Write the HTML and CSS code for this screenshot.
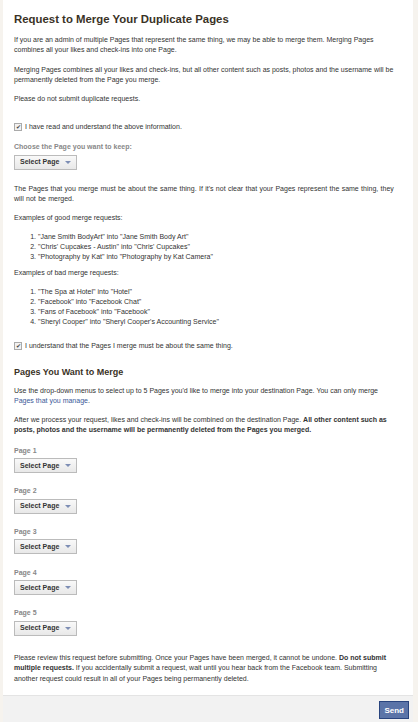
FILE: index.html
```html
<!DOCTYPE html>
<html lang="en">
<head>
  <meta charset="UTF-8" />
  <meta name="viewport" content="width=device-width, initial-scale=1.0"/>
  <title>Request to Merge Your Duplicate Pages</title>
  <link rel="stylesheet" href="styles.css">
</head>
<body>
  <div class="dialog">
    <div class="dialog-body">
      <h1>Request to Merge Your Duplicate Pages</h1>
      <p>If you are an admin of multiple Pages that represent the same thing, we may be able to merge them. Merging Pages combines all your likes and check-ins into one Page.</p>
      <p class="gap">Merging Pages combines all your likes and check-ins, but all other content such as posts, photos and the username will be permanently deleted from the Page you merge.</p>
      <p>Please do not submit duplicate requests.</p>

      <label class="check first"><span class="box">&#10004;</span> I have read and understand the above information.</label>

      <div class="field keep">
        <div class="label">Choose the Page you want to keep:</div>
        <span class="select">Select Page <span class="arrow"></span></span>
      </div>

      <p class="after-keep">The Pages that you merge must be about the same thing. If it's not clear that your Pages represent the same thing, they will not be merged.</p>
      <p>Examples of good merge requests:</p>
      <ol>
        <li>"Jane Smith BodyArt" into "Jane Smith Body Art"</li>
        <li>"Chris' Cupcakes - Austin" into "Chris' Cupcakes"</li>
        <li>"Photography by Kat" into "Photography by Kat Camera"</li>
      </ol>
      <p>Examples of bad merge requests:</p>
      <ol>
        <li>"The Spa at Hotel" into "Hotel"</li>
        <li>"Facebook" into "Facebook Chat"</li>
        <li>"Fans of Facebook" into "Facebook"</li>
        <li>"Sheryl Cooper" into "Sheryl Cooper's Accounting Service"</li>
      </ol>

      <label class="check"><span class="box">&#10004;</span> I understand that the Pages I merge must be about the same thing.</label>

      <h2>Pages You Want to Merge</h2>
      <p>Use the drop-down menus to select up to 5 Pages you'd like to merge into your destination Page. You can only merge <a href="#">Pages that you manage</a>.</p>
      <p>After we process your request, likes and check-ins will be combined on the destination Page. <b>All other content such as posts, photos and the username will be permanently deleted from the Pages you merged.</b></p>

      <div class="pages">
        <div class="field">
          <div class="label">Page 1</div>
          <span class="select">Select Page <span class="arrow"></span></span>
        </div>
        <div class="field">
          <div class="label">Page 2</div>
          <span class="select">Select Page <span class="arrow"></span></span>
        </div>
        <div class="field">
          <div class="label">Page 3</div>
          <span class="select">Select Page <span class="arrow"></span></span>
        </div>
        <div class="field">
          <div class="label">Page 4</div>
          <span class="select">Select Page <span class="arrow"></span></span>
        </div>
        <div class="field">
          <div class="label">Page 5</div>
          <span class="select">Select Page <span class="arrow"></span></span>
        </div>
      </div>

      <p class="last">Please review this request before submitting. Once your Pages have been merged, it cannot be undone. <b>Do not submit multiple requests.</b> If you accidentally submit a request, wait until you hear back from the Facebook team. Submitting another request could result in all of your Pages being permanently deleted.</p>
    </div>
    <div class="dialog-footer">
      <button class="send">Send</button>
    </div>
  </div>
</body>
</html>
```

FILE: styles.css
```css
* {
  margin: 0;
  padding: 0;
  box-sizing: border-box;
}
body {
  background: #f6f3ee;
  font-family: 'Liberation Sans', Arial, sans-serif;
  font-size: 7px;
  line-height: 10px;
  color: #333;
}
.dialog {
  width: 410px;
  margin-left: 3px;
  background: #fff;
}
.dialog-body {
  padding: 12px 14px 11px 11px;
}
h1 {
  font-size: 11.4px;
  line-height: 14px;
  font-weight: bold;
  color: #3a3226;
  margin-bottom: 9px;
}
p {
  margin-bottom: 9px;
}
p.gap {
  margin-top: 10px;
}
a {
  color: #3b5998;
  text-decoration: none;
}
b {
  color: #333;
}
ol {
  margin: 0 0 6px 24px;
}
.check {
  display: flex;
  align-items: center;
  gap: 3px;
  margin-top: 14px;
}
.check.first {
  margin-top: 18px;
}
.box {
  width: 8px;
  height: 8px;
  border: 1px solid #aaa;
  background: #f2f2f2;
  font-size: 6px;
  line-height: 6px;
  text-align: center;
  color: #444;
}
.field {
  margin-top: 13px;
}
.field.keep {
  margin-top: 10px;
}
.label {
  color: #888;
  font-weight: bold;
  margin-bottom: 2.5px;
}
.select {
  display: inline-flex;
  align-items: center;
  gap: 6px;
  height: 15px;
  padding: 0 5px;
  border: 1px solid #bbb;
  background: linear-gradient(#f9f9f9, #e8e8e8);
  font-weight: bold;
  color: #333;
}
.arrow {
  width: 0;
  height: 0;
  border-left: 3px solid transparent;
  border-right: 3px solid transparent;
  border-top: 3px solid #7d8db4;
}
p.after-keep {
  margin-top: 14px;
  word-spacing: 0.4px;
}
h2 {
  font-size: 9px;
  font-weight: bold;
  color: #3a3226;
  margin: 16px 0 9px;
}
.pages .field:first-child {
  margin-top: 11px;
}
.pages .field + .field {
  margin-top: 13.2px;
}
p.last {
  margin: 17px 0 0;
  line-height: 10.5px;
}
.dialog-footer {
  background: #f2f2f2;
  border-top: 1px solid #e4e4e4;
  padding: 5px 4px 4px;
  text-align: right;
}
.send {
  font-family: 'Liberation Sans', Arial, sans-serif;
  font-size: 8px;
  font-weight: bold;
  color: #fff;
  background: #5b74a8;
  border: 1px solid #29447e;
  height: 18px;
  padding: 0 4px;
}
```
